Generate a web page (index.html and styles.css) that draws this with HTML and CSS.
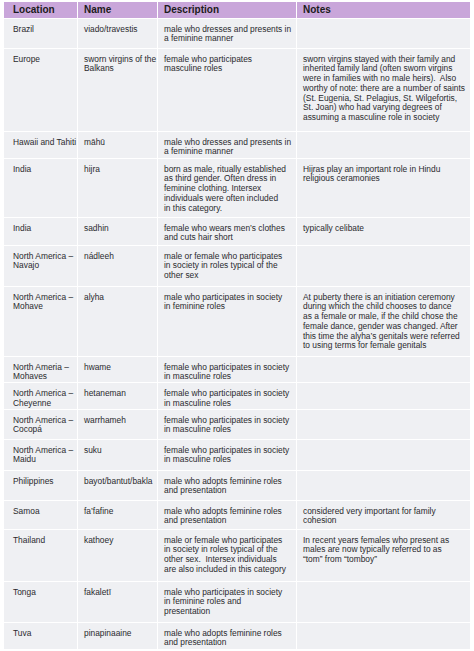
FILE: index.html
```html
<!DOCTYPE html>
<html>
<head>
<meta charset="utf-8">
<link rel="stylesheet" href="styles.css">
</head>
<body>
<table class="gt">
  <colgroup>
    <col class="c-loc"><col class="c-name"><col class="c-desc"><col class="c-notes">
  </colgroup>
  <thead>
    <tr><th>Location</th><th>Name</th><th>Description</th><th>Notes</th></tr>
  </thead>
  <tbody>
    <tr><td>Brazil</td><td>viado/travestis</td><td>male who dresses and presents in<br>a feminine manner</td><td></td></tr>
    <tr><td>Europe</td><td>sworn virgins of the<br>Balkans</td><td>female who participates<br>masculine roles</td><td>sworn virgins stayed with their family and<br>inherited family land (often sworn virgins<br>were in families with no male heirs).&nbsp; Also<br>worthy of note: there are a number of saints<br>(St. Eugenia, St. Pelagius, St. Wilgefortis,<br>St. Joan) who had varying degrees of<br>assuming a masculine role in society</td></tr>
    <tr><td>Hawaii and Tahiti</td><td>māhū</td><td>male who dresses and presents in<br>a feminine manner</td><td></td></tr>
    <tr><td>India</td><td>hijra</td><td>born as male, ritually established<br>as third gender. Often dress in<br>feminine clothing. Intersex<br>individuals were often included<br>in this category.</td><td>Hijras play an important role in Hindu<br>religious ceramonies</td></tr>
    <tr><td>India</td><td>sadhin</td><td>female who wears men’s clothes<br>and cuts hair short</td><td>typically celibate</td></tr>
    <tr><td>North America –<br>Navajo</td><td>nádleeh</td><td>male or female who participates<br>in society in roles typical of the<br>other sex</td><td></td></tr>
    <tr><td>North America –<br>Mohave</td><td>alyha</td><td>male who participates in society<br>in feminine roles</td><td>At puberty there is an initiation ceremony<br>during which the child chooses to dance<br>as a female or male, if the child chose the<br>female dance, gender was changed. After<br>this time the alyha’s genitals were referred<br>to using terms for female genitals</td></tr>
    <tr><td>North Ameria –<br>Mohaves</td><td>hwame</td><td>female who participates in society<br>in masculine roles</td><td></td></tr>
    <tr><td>North America –<br>Cheyenne</td><td>hetaneman</td><td>female who participates in society<br>in masculine roles</td><td></td></tr>
    <tr><td>North America –<br>Cocopá</td><td>warrhameh</td><td>female who participates in society<br>in masculine roles</td><td></td></tr>
    <tr><td>North America –<br>Maidu</td><td>suku</td><td>female who participates in society<br>in masculine roles</td><td></td></tr>
    <tr><td>Philippines</td><td>bayot/bantut/bakla</td><td>male who adopts feminine roles<br>and presentation</td><td></td></tr>
    <tr><td>Samoa</td><td>fa’fafine</td><td>male who adopts feminine roles<br>and presentation</td><td>considered very important for family<br>cohesion</td></tr>
    <tr><td>Thailand</td><td>kathoey</td><td>male or female who participates<br>in society in roles typical of the<br>other sex.&nbsp; Intersex individuals<br>are also included in this category</td><td>In recent years females who present as<br>males are now typically referred to as<br>“tom” from “tomboy”</td></tr>
    <tr><td>Tonga</td><td>fakaletī</td><td>male who participates in society<br>in feminine roles and<br>presentation</td><td></td></tr>
    <tr><td>Tuva</td><td>pinapinaaine</td><td>male who adopts feminine roles<br>and presentation</td><td></td></tr>
  </tbody>
</table>
</body>
</html>
```
FILE: styles.css
```css
html, body {
  margin: 0;
  padding: 0;
  background: #ffffff;
}

body {
  padding: 2px 0 0 3px;
  font-family: "Liberation Sans", Arial, sans-serif;
}

.gt {
  table-layout: fixed;
  border-collapse: collapse;
  width: 467px;
}

.c-loc { width: 74px; }
.c-name { width: 80px; }
.c-desc { width: 139px; }
.c-notes { width: 174px; }

.gt th,
.gt td {
  border: 1px solid #ffffff;
  padding: 0 4px 0 6px;
  white-space: nowrap;
  overflow: hidden;
  text-align: left;
}

.gt th:first-child,
.gt td:first-child {
  padding-left: 9px;
}

.gt thead tr {
  height: 16px;
}

.gt th {
  background: #c9a6da;
  color: #1c1c20;
  font-weight: bold;
  font-size: 10px;
  line-height: 12px;
  vertical-align: middle;
  border-top: none;
}

.gt td {
  background: #eff0f3;
  color: #2a2a2e;
  font-size: 8.4px;
  line-height: 9.8px;
  vertical-align: top;
  padding-top: 6px;
}

.gt tbody tr:nth-child(1) { height: 30px; }
.gt tbody tr:nth-child(2) { height: 83px; }
.gt tbody tr:nth-child(3) { height: 27px; }
.gt tbody tr:nth-child(4) { height: 59px; }
.gt tbody tr:nth-child(5) { height: 28px; }
.gt tbody tr:nth-child(6) { height: 41px; }
.gt tbody tr:nth-child(7) { height: 70px; }
.gt tbody tr:nth-child(8) { height: 25px; }
.gt tbody tr:nth-child(9) { height: 26px; }
.gt tbody tr:nth-child(10) { height: 30px; }
.gt tbody tr:nth-child(11) { height: 31px; }
.gt tbody tr:nth-child(12) { height: 30px; }
.gt tbody tr:nth-child(13) { height: 29px; }
.gt tbody tr:nth-child(14) { height: 52px; }
.gt tbody tr:nth-child(15) { height: 41px; }
.gt tbody tr:nth-child(16) { height: 27px; }
```
